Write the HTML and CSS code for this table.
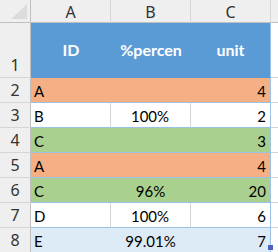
FILE: index.html
```html
<!DOCTYPE html>
<html>
<head>
<meta charset="utf-8">
<link rel="stylesheet" href="styles.css">
</head>
<body>
<div class="sheet">
  <div class="corner">
    <svg class="corner-tri" width="16" height="15" viewBox="0 0 16 15"><polygon points="16,0 16,15 0,15" fill="#dcdcdc"/></svg>
  </div>
  <div class="colhead">A</div>
  <div class="colhead">B</div>
  <div class="colhead">C</div>
  <div class="colhead extra"></div>

  <div class="rowhead tall">1</div>
  <div class="cell th">ID</div>
  <div class="cell th">%percen</div>
  <div class="cell th last">unit</div>
  <div class="cell blank"></div>

  <div class="rowhead">2</div>
  <div class="cell orange">A</div>
  <div class="cell orange"></div>
  <div class="cell orange num last">4</div>
  <div class="cell blank"></div>

  <div class="rowhead">3</div>
  <div class="cell white">B</div>
  <div class="cell white mid">100%</div>
  <div class="cell white num last">2</div>
  <div class="cell blank"></div>

  <div class="rowhead">4</div>
  <div class="cell green">C</div>
  <div class="cell green"></div>
  <div class="cell green num last">3</div>
  <div class="cell blank"></div>

  <div class="rowhead">5</div>
  <div class="cell orange">A</div>
  <div class="cell orange"></div>
  <div class="cell orange num last">4</div>
  <div class="cell blank"></div>

  <div class="rowhead">6</div>
  <div class="cell green">C</div>
  <div class="cell green mid">96%</div>
  <div class="cell green num last">20</div>
  <div class="cell blank"></div>

  <div class="rowhead">7</div>
  <div class="cell white">D</div>
  <div class="cell white mid">100%</div>
  <div class="cell white num last">6</div>
  <div class="cell blank"></div>

  <div class="rowhead">8</div>
  <div class="cell pale">E</div>
  <div class="cell pale mid">99.01%</div>
  <div class="cell pale num last handle-cell">7<span class="handle"></span></div>
  <div class="cell blank"></div>
</div>
</body>
</html>
```
FILE: styles.css
```css
* { box-sizing: border-box; }

html, body {
  margin: 0;
  padding: 0;
  background: #ffffff;
  overflow: hidden;
}

.sheet {
  display: grid;
  grid-template-columns: 31px 80px 80px 80px 1fr;
  grid-template-rows: 23px 55px repeat(7, 25px);
  width: 278px;
  font-family: Lato, "Liberation Sans", sans-serif;
  font-size: 15px;
  color: #000;
}

.corner {
  position: relative;
  background: #efefef;
  border-right: 1px solid #bfbfbf;
  border-bottom: 1px solid #bfbfbf;
}

.corner-tri {
  position: absolute;
  right: 3px;
  bottom: 3px;
}

.colhead {
  background: #efefef;
  border-right: 1px solid #d6d6d6;
  border-bottom: 1px solid #bfbfbf;
  display: flex;
  align-items: center;
  justify-content: center;
  font-family: "Noto Sans", sans-serif;
  font-size: 16px;
  color: #333;
  padding-top: 1px;
}

.colhead.extra { border-right: none; }

.rowhead {
  background: #efefef;
  border-right: 1px solid #bfbfbf;
  border-bottom: 1px solid #d6d6d6;
  display: flex;
  align-items: flex-end;
  justify-content: center;
  font-family: "Noto Sans", sans-serif;
  font-size: 16px;
  color: #333;
  line-height: 22px;
  padding-bottom: 1px;
}

.cell {
  display: flex;
  align-items: flex-end;
  padding: 0 4px 2px 3px;
  line-height: 18px;
  border-bottom: 1px solid #9bc2e6;
  white-space: nowrap;
  overflow: hidden;
}

.cell.last { border-right: 1px solid #9bc2e6; }

.th {
  background: #5b9bd5;
  color: #fff;
  font-weight: bold;
  font-size: 16px;
  align-items: center;
  justify-content: center;
  border-bottom-color: #5b9bd5;
  padding: 0 2px;
}
.th.last { border-right-color: #9bc2e6; }

.orange { background: #f4b084; }
.green { background: #a9d08e; }
.pale { background: #ddebf7; }
.white {
  background: #ffffff;
  border-right: 1px solid #d4d4d4;
}

.num { justify-content: flex-end; }
.mid { justify-content: center; }

.blank {
  background: #fff;
  border-bottom: 1px solid #d4d4d4;
}

.handle-cell { position: relative; overflow: visible; }

.handle {
  position: absolute;
  right: -3px;
  bottom: 2px;
  width: 5px;
  height: 5px;
  background: #4f5fc2;
}
```
